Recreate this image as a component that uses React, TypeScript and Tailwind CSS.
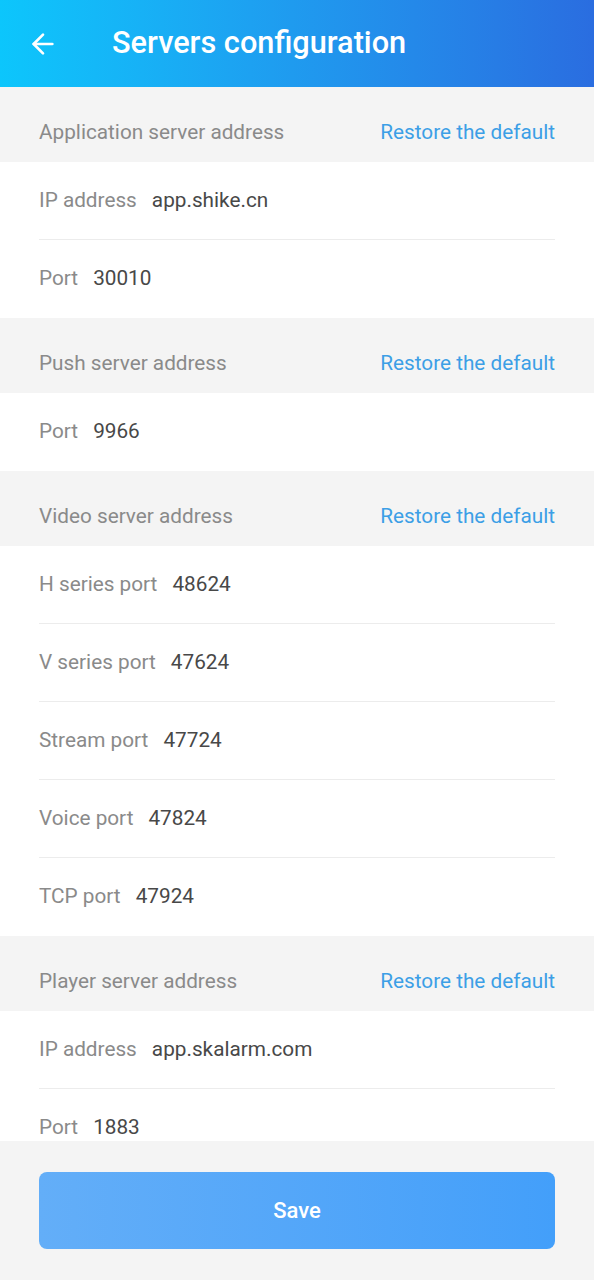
import { ArrowLeft } from 'lucide-react';

type Field = { label: string; value: string };
type Section = { title: string; fields: Field[] };

const sections: Section[] = [
  {
    title: 'Application server address',
    fields: [
      { label: 'IP address', value: 'app.shike.cn' },
      { label: 'Port', value: '30010' },
    ],
  },
  {
    title: 'Push server address',
    fields: [{ label: 'Port', value: '9966' }],
  },
  {
    title: 'Video server address',
    fields: [
      { label: 'H series port', value: '48624' },
      { label: 'V series port', value: '47624' },
      { label: 'Stream port', value: '47724' },
      { label: 'Voice port', value: '47824' },
      { label: 'TCP port', value: '47924' },
    ],
  },
  {
    title: 'Player server address',
    fields: [
      { label: 'IP address', value: 'app.skalarm.com' },
      { label: 'Port', value: '1883' },
    ],
  },
];

function SectionBlock({ section }: { section: Section }) {
  return (
    <div>
      <div className="flex h-[75px] items-center justify-between bg-[#f4f4f4] px-[39px] pt-[17px] text-[20.75px]">
        <span className="text-[#8a8a8a]">{section.title}</span>
        <button className="text-[#3c9fe6]" type="button">
          Restore the default
        </button>
      </div>
      <div className="bg-white px-[39px]">
        {section.fields.map((field, i) => (
          <div
            key={field.label}
            className={`flex h-[78px] items-center gap-[15px] text-[20.75px] ${
              i < section.fields.length - 1 ? 'border-b border-[#ececec]' : ''
            }`}
          >
            <span className="text-[#8a8a8a]">{field.label}</span>
            <span className="text-[#484848]">{field.value}</span>
          </div>
        ))}
      </div>
    </div>
  );
}

export default function App() {
  return (
    <div
      className="flex h-[1280px] w-[594px] flex-col bg-[#f4f4f4]"
      style={{ fontFamily: 'Roboto, "Noto Sans", sans-serif' }}
    >
      <header className="flex h-[87px] shrink-0 items-center bg-gradient-to-r from-[#0cc6fc] to-[#2a6de0] px-[27px] text-white">
        <ArrowLeft className="h-[32px] w-[32px]" strokeWidth={2} />
        <h1 className="ml-[53px] text-[30.7px] font-medium">Servers configuration</h1>
      </header>

      <main className="min-h-0 flex-1 overflow-hidden">
        {sections.map((section) => (
          <SectionBlock key={section.title} section={section} />
        ))}
      </main>

      <footer className="flex h-[139px] shrink-0 items-center bg-[#f4f4f4] px-[39px]">
        <button
          className="h-[77px] w-full rounded-lg bg-gradient-to-r from-[#63aef8] to-[#439ffa] text-[22px] font-medium text-white"
          type="button"
        >
          Save
        </button>
      </footer>
    </div>
  );
}
